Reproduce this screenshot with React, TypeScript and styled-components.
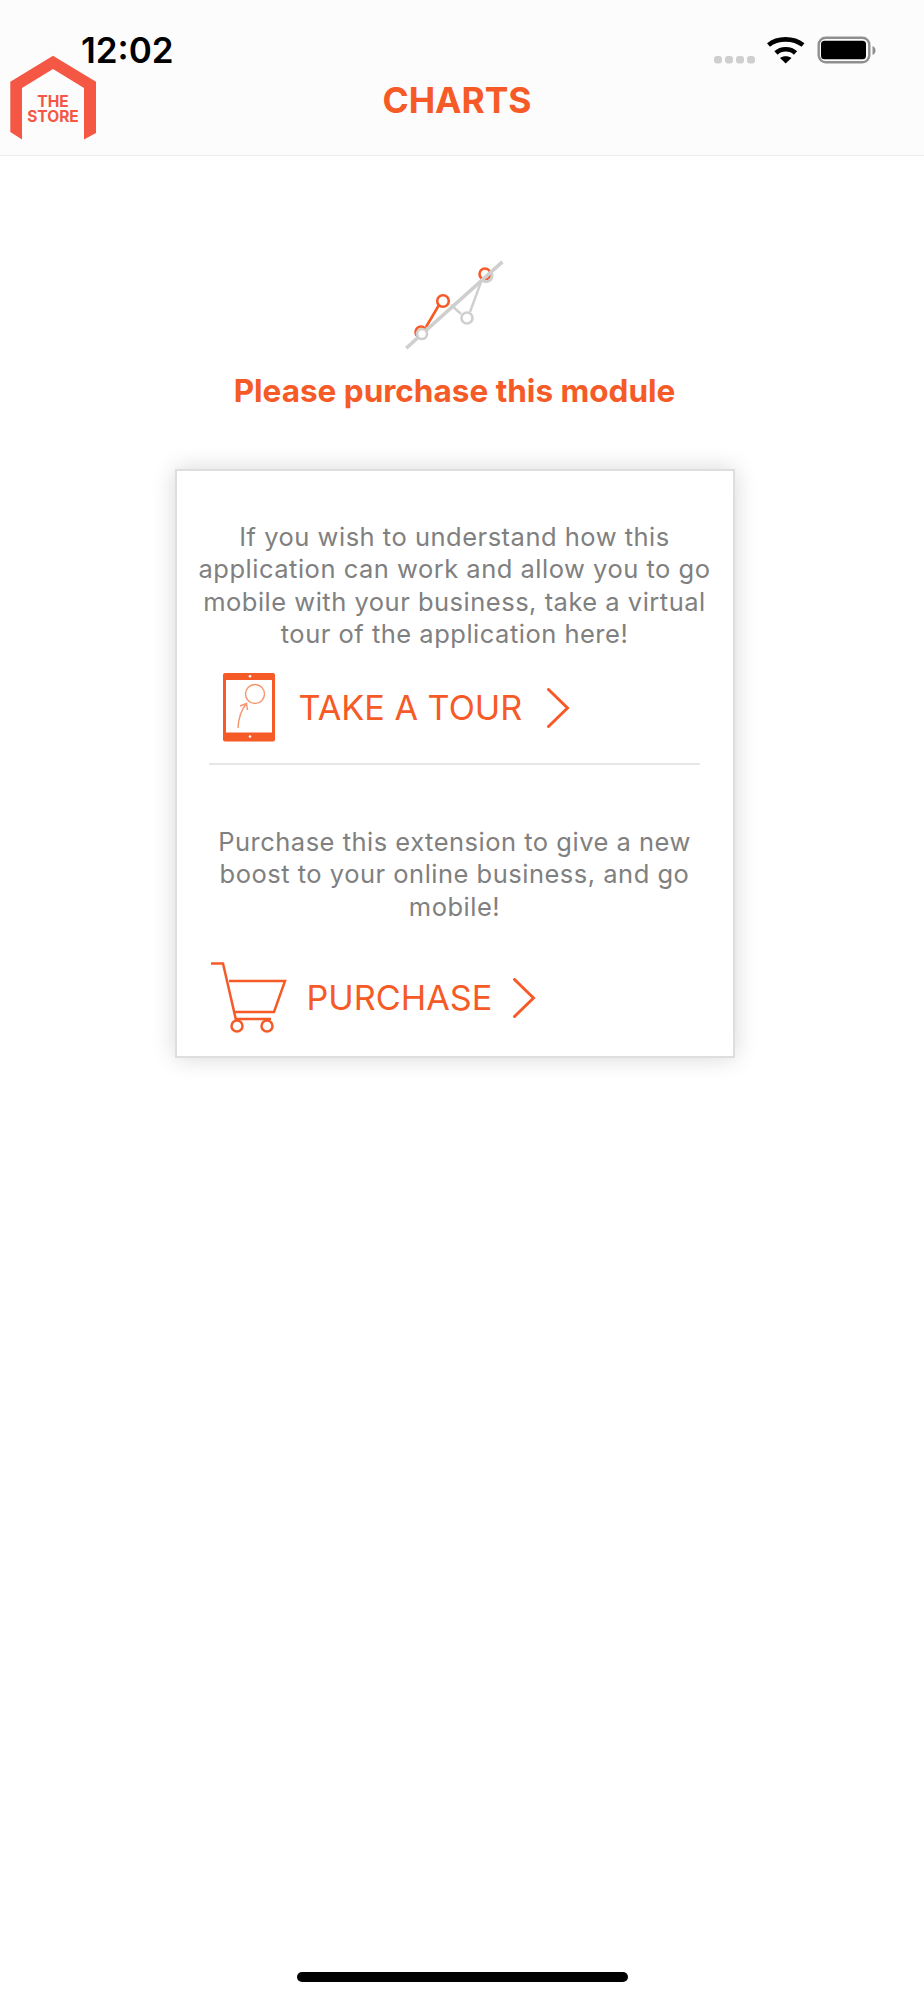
import React from "react";
import styled, { createGlobalStyle } from "styled-components";

const ORANGE = "#f55a27";

const Global = createGlobalStyle`
  html, body { margin: 0; padding: 0; background: #fff; }
  body { font-family: Inter, "Liberation Sans", sans-serif; }
  #root { width: 924px; }
`;

const Page = styled.div`
  width: 924px;
  height: 2000px;
  display: flex;
  flex-direction: column;
  background: #fff;
  overflow: hidden;
`;

const Header = styled.header`
  position: relative;
  width: 100%;
  height: 156px;
  box-sizing: border-box;
  background: #fcfcfc;
  border-bottom: 1px solid #ececec;
  flex: none;
`;

const StatusBar = styled.div`
  position: relative;
  display: flex;
  align-items: center;
  height: 50px;
  padding: 25px 0 0 81px;
`;

const Time = styled.span`
  font-size: 35px;
  font-weight: 600;
  color: #000;
  line-height: 50px;
`;

const StatusIcons = styled.div`
  position: absolute;
  left: 714px;
  top: 34px;
`;

const Logo = styled.div`
  position: absolute;
  left: 10px;
  top: 55px;
  width: 86px;
  height: 85px;
`;

const LogoText = styled.div`
  position: absolute;
  left: 0;
  right: 0;
  top: 39px;
  text-align: center;
  font-size: 15.5px;
  line-height: 15px;
  font-weight: 700;
  color: #f55745;
`;

const Title = styled.h1`
  position: absolute;
  left: 0;
  right: 10px;
  top: 81px;
  margin: 0;
  text-align: center;
  font-size: 35.4px;
  line-height: 40px;
  font-weight: 700;
  color: ${ORANGE};
`;

const Content = styled.main`
  flex: 1;
  display: flex;
  flex-direction: column;
  align-items: center;
  padding-right: 15px;
`;

const Hero = styled.svg`
  display: block;
  margin: 99px 2px 0 0;
  flex: none;
`;

const Heading = styled.h2`
  margin: 17px 0 0 0;
  font-size: 31.5px;
  line-height: 38px;
  font-weight: 700;
  color: ${ORANGE};
`;

const Card = styled.section`
  width: 560px;
  height: 589px;
  margin-top: 59px;
  box-sizing: border-box;
  background: #fff;
  border: 2px solid #dedede;
  box-shadow: 0 0 22px rgba(0, 0, 0, 0.16);
  display: flex;
  flex-direction: column;
  align-items: center;
  padding-top: 50px;
`;

const Copy = styled.p<{ $top?: number }>`
  margin: ${(p) => p.$top ?? 0}px 0 0 0;
  width: 518px;
  text-align: center;
  font-size: 25.5px;
  line-height: 32.3px;
  letter-spacing: 0.5px;
  font-weight: 400;
  color: #808080;
`;

const ActionRow = styled.div<{ $gap: number; $indent: number; $top: number }>`
  display: flex;
  align-items: center;
  align-self: flex-start;
  gap: ${(p) => p.$gap}px;
  margin-left: ${(p) => p.$indent}px;
  margin-top: ${(p) => p.$top}px;
`;

const ActionLabel = styled.span`
  font-size: 34.2px;
  line-height: 40px;
  font-weight: 400;
  color: ${ORANGE};
`;

const Divider = styled.hr`
  width: 491px;
  margin: 21px 0 0 0;
  border: 0;
  border-top: 2px solid #e6e6e6;
`;

const HomeIndicator = styled.div`
  width: 331px;
  height: 10px;
  border-radius: 5px;
  background: #000;
  margin: auto auto 18px 297px;
  flex: none;
  align-self: flex-start;
`;

const Chevron = () => (
  <svg width="24" height="40" viewBox="0 0 24 40" fill="none">
    <path d="M2.5 1.5 L21.5 20 L2.5 38.5" stroke={ORANGE} strokeWidth="3" strokeLinecap="round" strokeLinejoin="miter" />
  </svg>
);

export default function App() {
  return (
    <Page>
      <Global />
      <Header>
        <StatusBar>
          <Time>12:02</Time>
          <StatusIcons>
            <svg width="166" height="32" viewBox="0 0 166 32">
              <g fill="#cfcfcf">
                <rect x="0" y="22" width="8" height="7.500" rx="3" />
                <rect x="11" y="22" width="8" height="7.500" rx="3" />
                <rect x="22" y="22" width="8" height="7.500" rx="3" />
                <rect x="33" y="22" width="8" height="7.500" rx="3" />
              </g>
              <g fill="none" stroke="#000" strokeWidth="4.6">
                <path d="M54.500 11 C63.500 3.500 79.500 3.500 89 11" />
                <path d="M62 19 C67 14 76.500 14 81.500 19" />
              </g>
              <path d="M66 24 C69 21.500 74.500 21.500 77.500 24 L71.700 29.500 Z" fill="#000" />
              <rect x="104.700" y="3.700" width="50.600" height="24.600" rx="7" fill="none" stroke="#8f8f8f" strokeWidth="2.400" />
              <rect x="107" y="6.700" width="45" height="18.600" rx="3.500" fill="#000" />
              <path d="M158.500 12 C162.500 13 162.500 20 158.500 21 Z" fill="#8f8f8f" />
            </svg>
          </StatusIcons>
        </StatusBar>
        <Logo>
          <svg width="86" height="85" viewBox="0 0 86 85">
            <path d="M43 0.700 L86 26.700 L86 78 L74 84.500 L74 33 L43 14 L12 33 L12 84.500 L0.300 77 L0.300 26.700 Z" fill="#f55745" />
          </svg>
          <LogoText>
            THE
            <br />
            STORE
          </LogoText>
        </Logo>
        <Title>CHARTS</Title>
      </Header>

      <Content>
        <Hero width="105" height="100" viewBox="0 0 105 100" fill="none">
          <g stroke={ORANGE} strokeWidth="2.600">
            <path d="M25 72 L38 50" />
            <circle cx="20" cy="77" r="5.500" />
            <circle cx="42" cy="46" r="5.800" fill="#fff" />
            <circle cx="84" cy="19" r="5.500" />
          </g>
          <g stroke="#cfcfcf" fill="none">
            <path d="M6.500 92 L100 8" strokeWidth="3.600" strokeLinecap="square" />
            <path d="M50 50 L60 59 M80 27 L69 57" strokeWidth="2.400" />
            <circle cx="66" cy="63" r="5.500" strokeWidth="2.600" fill="#fff" />
            <circle cx="21" cy="79" r="5" strokeWidth="2.600" fill="#fff" />
            <path d="M90 17 A5.500 5.500 0 0 1 80 24" strokeWidth="3" />
          </g>
        </Hero>
        <Heading>Please purchase this module</Heading>

        <Card>
          <Copy>
            If you wish to understand how this application can work and allow you to go mobile with your business, take a
            virtual tour of the application here!
          </Copy>
          <ActionRow $gap={24} $indent={46} $top={23}>
            <svg width="52" height="69" viewBox="0 0 52 69" fill="none">
              <rect x="0" y="0" width="52" height="68.500" rx="2" fill={ORANGE} />
              <rect x="3" y="7" width="46" height="52.500" fill="#fff" />
              <circle cx="27" cy="3.200" r="1.300" fill="#fff" />
              <circle cx="27" cy="63.500" r="1.300" fill="#fff" />
              <circle cx="32" cy="21" r="9.500" stroke="#f7936f" strokeWidth="1.400" />
              <path d="M15 55 C15.500 45 18 37 23.500 30.500 M17 33 L23.500 30.500 L24.500 37" stroke="#f7936f" strokeWidth="1.400" />
            </svg>
            <ActionLabel>TAKE A TOUR</ActionLabel>
            <Chevron />
          </ActionRow>
          <Divider />
          <Copy $top={61}>Purchase this extension to give a new boost to your online business, and go mobile!</Copy>
          <ActionRow $gap={20} $indent={34} $top={39}>
            <svg width="76" height="72" viewBox="0 0 76 72" fill="none" stroke={ORANGE} strokeWidth="2.500">
              <path d="M0 1.500 L12 1.500 L25 58 L25 57 L60 57" />
              <path d="M18 19 L74 19 L63 50 L24 50" />
              <circle cx="26" cy="64" r="5.500" />
              <circle cx="56" cy="64" r="5.500" />
            </svg>
            <ActionLabel>PURCHASE</ActionLabel>
            <Chevron />
          </ActionRow>
        </Card>
        <HomeIndicator />
      </Content>
    </Page>
  );
}
